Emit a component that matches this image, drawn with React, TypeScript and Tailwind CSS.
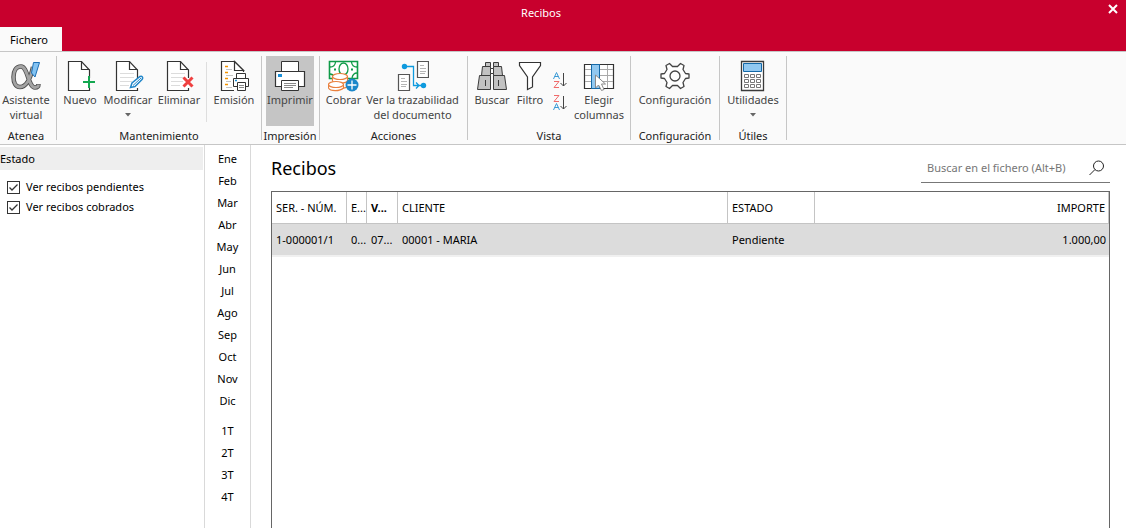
import React, { useState } from 'react';

const months = ['Ene', 'Feb', 'Mar', 'Abr', 'May', 'Jun', 'Jul', 'Ago', 'Sep', 'Oct', 'Nov', 'Dic'];
const quarters = ['1T', '2T', '3T', '4T'];

const Icon: React.FC<{ children: React.ReactNode }> = ({ children }) => (
  <svg width="32" height="32" viewBox="0 0 32 32" fill="none" className="shrink-0">
    {children}
  </svg>
);

const AlphaIcon = () => (
  <Icon>
    <path
      d="M23 7C21 16 17 27 10 27C5.500 27 3.500 22.500 3.500 17C3.500 11 6 6.500 11 6.500C18 6.500 18 27.500 25 27.500C27 27.500 28.500 26.500 28.500 24"
      stroke="#4d4d4d"
      strokeWidth="4.500"
    />
    <path
      d="M23 7C21 16 17 27 10 27C5.500 27 3.500 22.500 3.500 17C3.500 11 6 6.500 11 6.500C18 6.500 18 27.500 25 27.500C27 27.500 28.500 26.500 28.500 24.500"
      stroke="#a3a3a3"
      strokeWidth="2.800"
    />
    <path d="M23.500 2.500H29.500L25 17L21.500 13Z" fill="#83c3f2" stroke="#1c6fb5" />
  </Icon>
);

const SheetOutline = () => (
  <>
    <path d="M25.500 18V10L17.500 1.500H4.500V30.500H25.500V28" fill="#fff" stroke="#333" strokeWidth="1.2" />
    <path d="M17.500 1.500V9.500H25.500" stroke="#333" strokeWidth="1.2" />
  </>
);

const SheetLines = () => <path d="M8 13.500H22M8 17.500H22M8 21.500H20M8 25.500H17" stroke="#dcdcdc" />;

const NewIcon = () => (
  <Icon>
    <SheetOutline />
    <path d="M25 16V28M19 22H31" stroke="#14a750" strokeWidth="2" />
  </Icon>
);

const EditIcon = () => (
  <Icon>
    <SheetOutline />
    <SheetLines />
    <path d="M18.500 27.500L20 23L28 16.500C30 15.500 31.500 17.500 30 19.500L23 26.500Z" fill="#fff" stroke="#2186c9" strokeWidth="1.500" />
    <path d="M21 25.500L29 18" stroke="#2186c9" />
  </Icon>
);

const DeleteIcon = () => (
  <Icon>
    <SheetOutline />
    <SheetLines />
    <path d="M20.500 17.500L29.500 26.500M29.500 17.500L20.500 26.500" stroke="#ef4040" strokeWidth="3" />
  </Icon>
);

const IssueIcon = () => (
  <Icon>
    <path d="M16 30.500H3.500V1.500H16.500L25.500 10.500V12" fill="#fff" stroke="#333" strokeWidth="1.2" />
    <path d="M16.500 1.500V10.500H25.500Z" fill="#fff" stroke="#333" strokeWidth="1.2" />
    <path d="M7 6.500H10M7 12.500H10M7 18.500H10M7 24.500H10" stroke="#f39200" strokeWidth="1.500" />
    <path d="M8 9.500H14M8 15.500H15M8 21.500H13M8 27.500H14" stroke="#c4c4c4" />
    <path d="M18.500 13.500H27.500V18.500H18.500Z" fill="#fff" stroke="#333" />
    <path d="M15.500 18.500H30.500V26.500H15.500Z" fill="#fff" stroke="#333" />
    <path d="M19.500 22.500H27.500V30.500H19.500Z" fill="#fff" stroke="#333" />
    <path d="M21 25.500H26M21 27.500H26" stroke="#888" />
    <path d="M17 20.500H19" stroke="#1a8fd8" strokeWidth="1.500" />
  </Icon>
);

const PrintIcon = () => (
  <Icon>
    <path d="M7.500 1.500H24.500V12.500H7.500Z" fill="#fff" stroke="#333" />
    <path d="M1.500 11.500H30.500V26.500H1.500Z" fill="#fff" stroke="#333" strokeWidth="1.2" />
    <path d="M7.500 20.500H24.500V30.500H7.500Z" fill="#fff" stroke="#333" />
    <path d="M10 23.500H22M10 25.500H22M10 27.500H19" stroke="#888" />
    <path d="M4 14H8V17H4Z" fill="#1a8fd8" />
  </Icon>
);

const CashIcon = () => (
  <Icon>
    <path d="M1.500 1.500H29.500V18.500H1.500Z" fill="#fff" stroke="#0f9b48" strokeWidth="1.6" />
    <path d="M2 7Q7 7 7.500 2M29 7Q24 7 23.500 2M29 13Q25 13 24 18M2 14Q5 14 6 17" stroke="#0f9b48" strokeWidth="1.300" />
    <ellipse cx="15.500" cy="9" rx="4.500" ry="6" stroke="#0f9b48" strokeWidth="1.300" />
    <path d="M6 9.500H8M23 9.500H25" stroke="#0f9b48" strokeWidth="2" />
    <g fill="#fff" stroke="#e9803e" strokeWidth="1.200">
      <path d="M5.500 22V26C7 29 18 29 20.500 26V22Z" />
      <path d="M4.500 17V21C6 24 17 24 19.500 21V17Z" />
      <ellipse cx="12" cy="16.500" rx="7.500" ry="3" />
      <path d="M0.500 25V28C2 31.500 12 31.500 15.500 28V25Z" />
      <ellipse cx="8" cy="24.500" rx="7.500" ry="3" />
    </g>
    <circle cx="24" cy="25" r="6.500" fill="#1b87c9" />
    <path d="M24 20.500V29.500M19.500 25H28.500" stroke="#fff" strokeWidth="1.300" />
  </Icon>
);

const TraceIcon = () => (
  <Icon>
    <path d="M20.500 1.500H31.500V17.500H20.500ZM1.500 14.500H12.500V30.500H1.500Z" fill="#fff" stroke="#555" strokeWidth="1.200" />
    <path d="M23 5.500H27M23 8.500H29M23 11.500H29M23 13.500H28M4 18.500H8M4 21.500H10M4 24.500H10M4 26.500H9" stroke="#b5b5b5" />
    <path d="M8 6.500H16.500V25.500H25M19 22.500L22 25.500L19 28.500" stroke="#0e9ade" strokeWidth="1.300" />
    <circle cx="7.500" cy="6.500" r="2.700" fill="#0e9ade" />
    <circle cx="26.500" cy="25.500" r="2.700" fill="#0e9ade" />
  </Icon>
);

const BinocularsIcon = () => (
  <Icon>
    <g fill="#c2c2c2" stroke="#3c3c3c">
      <path d="M9.500 2.500H14.500V6.500H9.500ZM17.500 2.500H22.500V6.500H17.500Z" />
      <path d="M6.500 6.500H14.500V15.500H5.500ZM17.500 6.500H25.500L26.500 15.500H17.500Z" />
      <path d="M14.500 8.500H17.500V13.500H14.500Z" fill="#fff" />
      <path d="M3.500 15.500H14.500V29.500H1.500ZM17.500 15.500H28.500L30.500 29.500H17.500Z" />
      <path d="M9.500 20V26M22.500 20V26" />
    </g>
  </Icon>
);

const FilterIcon = () => (
  <Icon>
    <path d="M5.500 2.500H26.500V5.500L18.500 17V27L13.500 29.500V17L5.500 5.500Z" fill="#fff" stroke="#333" strokeWidth="1.200" />
  </Icon>
);

const SortIcon: React.FC<{ descending?: boolean }> = ({ descending }) => (
  <svg width="16" height="18" viewBox="0 0 16 18" fill="none">
    <path
      d={descending ? 'M1.500 16L4.500 9.500L7.500 16M2.500 13.500H6.500' : 'M1.500 8L4.500 1.500L7.500 8M2.500 5.500H6.500'}
      stroke="#3c9bd6"
    />
    <path
      d={descending ? 'M2 1.500H7L2 7.500H7' : 'M2 10.500H7L2 16.500H7'}
      stroke="#f06a6a"
    />
    <path d="M11.500 2V15M8.500 12L11.500 15L14.500 12" stroke="#444" />
  </svg>
);

const ColumnsIcon = () => (
  <Icon>
    <path d="M1.500 4.500H30.500V28.500H1.500Z" fill="#fff" stroke="#333" strokeWidth="1.200" />
    <path d="M2 9.500H30M2 15.500H30M2 21.500H30M16.500 5V28M24.500 5V28" stroke="#aaa" />
    <path d="M8.500 4.500H16.500V28.500H8.500Z" fill="#91c8f0" stroke="#1469a8" />
    <path d="M12.500 15V28L15.500 25L18.500 30.500L21 29.500L18.500 24H22.500Z" fill="#fff" stroke="#8a8a8a" />
  </Icon>
);

const GearIcon = () => (
  <Icon>
    <path
      d="M10.500 3.500L13.500 6.500H18.500L21.500 3.500L25 5.500L24 9.500L26.500 13.500L30 14V18L26.500 18.500L24 22.500L25 26.500L21.500 28.500L18.500 25.500H13.500L10.500 28.500L7 26.500L8 22.500L5.500 18.500L2 18V14L5.500 13.500L8 9.500L7 5.500Z"
      fill="#fff"
      stroke="#444"
      strokeWidth="1.300"
      strokeLinejoin="round"
    />
    <circle cx="16" cy="16" r="5" fill="#fff" stroke="#444" strokeWidth="1.300" />
  </Icon>
);

const CalculatorIcon = () => (
  <Icon>
    <path d="M4.500 1.500H26.500V30.500H4.500Z" fill="#fff" stroke="#3a3a3a" strokeWidth="1.300" />
    <path d="M6.500 3.500H24.500V11.500H6.500Z" fill="#91c8f0" stroke="#1469a8" />
    {[14.5, 19.5, 24.5].map(y => (
      <path key={y} d={`M7.500 ${y}h4v3h-4zM13.500 ${y}h4v3h-4zM19.500 ${y}h4v3h-4z`} stroke="#777" />
    ))}
  </Icon>
);

interface RibbonButtonProps {
  label: string;
  icon: React.ReactNode;
  className: string;
  active?: boolean;
  menu?: boolean;
}

const RibbonButton: React.FC<RibbonButtonProps> = ({ label, icon, className, active, menu }) => (
  <button
    type="button"
    className={`flex h-[70px] shrink-0 flex-col items-center pt-1 leading-[15px] whitespace-pre text-[#444] ${className} ${
      active ? 'bg-[#c5c5c5]' : ''
    }`}
  >
    {icon}
    <span>{label}</span>
    {menu && (
      <svg width="6" height="4" viewBox="0 0 6 4" className="mt-1.5">
        <path d="M0 0H6L3 3.500Z" fill="#666" />
      </svg>
    )}
  </button>
);

interface RibbonGroupProps {
  title: string;
  className: string;
  children: React.ReactNode;
}

const RibbonGroup: React.FC<RibbonGroupProps> = ({ title, className, children }) => (
  <section className={`flex shrink-0 flex-col border-r border-[#c6c6c6] ${className}`}>
    <div className="flex justify-center">{children}</div>
    <h2 className="mt-0.5 text-center leading-4 whitespace-nowrap text-[#222]">{title}</h2>
  </section>
);

interface CheckProps {
  id: string;
  label: string;
}

const Check: React.FC<CheckProps> = ({ id, label }) => {
  const [checked, setChecked] = useState(true);

  return (
    <div className="flex h-5 items-center gap-1.5">
      <span className="grid">
        <input
          id={id}
          type="checkbox"
          checked={checked}
          onChange={e => setChecked(e.target.checked)}
          className="col-start-1 row-start-1 size-[13px] appearance-none border border-[#333] bg-white"
        />
        {checked && (
          <svg width="13" height="13" viewBox="0 0 13 13" fill="none" className="pointer-events-none col-start-1 row-start-1">
            <path d="M2.500 6.500L5 9L10.500 3.500" stroke="#333" strokeWidth="1.300" />
          </svg>
        )}
      </span>
      <label htmlFor={id}>{label}</label>
    </div>
  );
};

const PeriodButton: React.FC<{ label: string }> = ({ label }) => (
  <button type="button" className="h-[22px] w-full text-center">
    {label}
  </button>
);

const App: React.FC = () => {
  const [query, setQuery] = useState('');

  return (
    <div className="flex min-h-screen flex-col bg-white font-['Noto_Sans','Open_Sans',sans-serif] text-[11px] text-black">
      <header className="bg-[#c8002d] text-white">
        <div className="flex h-[27px]">
          <h1 className="flex-1 text-center leading-[26px]">Recibos</h1>
          <button type="button" aria-label="Cerrar" className="flex h-[18px] w-11 items-center justify-end pr-2">
            <svg width="10" height="10" viewBox="0 0 10 10" fill="none">
              <path d="M1 1L9 9M9 1L1 9" stroke="#fff" strokeWidth="2" />
            </svg>
          </button>
        </div>
        <div className="flex">
          <button type="button" className="h-6 w-[62px] bg-[#fafafa] pt-0.5 pr-1 text-black">
            Fichero
          </button>
        </div>
      </header>

      {/* Ribbon */}
      <div className="flex h-[94px] border-t border-b border-[#c6c6c6] bg-[#fafafa] py-1">
        <RibbonGroup title="Atenea" className="w-[57px] pr-1">
          <RibbonButton label={'Asistente\nvirtual'} icon={<AlphaIcon />} className="w-[52px]" />
        </RibbonGroup>
        <RibbonGroup title="Mantenimiento" className="w-[205px]">
          <RibbonButton label="Nuevo" icon={<NewIcon />} className="w-[46px]" />
          <RibbonButton label="Modificar" icon={<EditIcon />} className="w-[50px]" menu />
          <RibbonButton label="Eliminar" icon={<DeleteIcon />} className="w-[52px]" />
          <span className="mt-1.5 ml-px h-[60px] w-px shrink-0 bg-[#dedede]" />
          <RibbonButton label="Emisión" icon={<IssueIcon />} className="w-[54px]" />
        </RibbonGroup>
        <RibbonGroup title="Impresión" className="w-[58px] pr-px">
          <RibbonButton label="Imprimir" icon={<PrintIcon />} className="w-12" active />
        </RibbonGroup>
        <RibbonGroup title="Acciones" className="w-[148px]">
          <RibbonButton label="Cobrar" icon={<CashIcon />} className="w-[38px]" />
          <RibbonButton label={'Ver la trazabilidad\ndel documento'} icon={<TraceIcon />} className="w-[100px]" />
        </RibbonGroup>
        <RibbonGroup title="Vista" className="w-[163px]">
          <RibbonButton label="Buscar" icon={<BinocularsIcon />} className="w-10" />
          <RibbonButton label="Filtro" icon={<FilterIcon />} className="w-9" />
          <div className="flex w-6 shrink-0 flex-col items-center gap-[5px] pt-[15px]">
            <button type="button" aria-label="Orden ascendente">
              <SortIcon />
            </button>
            <button type="button" aria-label="Orden descendente">
              <SortIcon descending />
            </button>
          </div>
          <RibbonButton label={'Elegir\ncolumnas'} icon={<ColumnsIcon />} className="w-[54px]" />
        </RibbonGroup>
        <RibbonGroup title="Configuración" className="w-[89px]">
          <RibbonButton label="Configuración" icon={<GearIcon />} className="w-20" />
        </RibbonGroup>
        <RibbonGroup title="Útiles" className="w-[67px]">
          <RibbonButton label="Utilidades" icon={<CalculatorIcon />} className="w-14" menu />
        </RibbonGroup>
      </div>

      <div className="flex flex-1">
        <aside className="w-[205px] shrink-0 border-r border-[#d9d9d9] pt-0.5">
          <h2 className="mr-px h-[23px] bg-[#eee] leading-[23px]">Estado</h2>
          <div className="pt-[7px] pl-[7px]">
            <Check id="pendientes" label="Ver recibos pendientes" />
            <Check id="cobrados" label="Ver recibos cobrados" />
          </div>
        </aside>

        <nav className="flex w-[46px] shrink-0 flex-col border-r border-[#d9d9d9] pt-[3px]">
          {months.map(m => (
            <PeriodButton key={m} label={m} />
          ))}
          <div className="mt-2">
            {quarters.map(q => (
              <PeriodButton key={q} label={q} />
            ))}
          </div>
        </nav>

        <main className="flex min-w-0 flex-1 flex-col pr-4 pl-5">
          <div className="flex h-[46px] items-start justify-between">
            <h2 className="pt-[7px] text-[18px] leading-8">Recibos</h2>
            <div className="mt-2 flex h-[30px] w-[189px] items-center border-b border-[#777]">
              <input
                type="text"
                aria-label="Buscar en el fichero"
                placeholder="Buscar en el fichero (Alt+B)"
                value={query}
                onChange={e => setQuery(e.target.value)}
                className="min-w-0 flex-1 pt-0.5 pl-1.5 outline-none placeholder:text-[#767676]"
              />
              <button type="button" aria-label="Buscar" className="pr-[5px]">
                <svg width="16" height="16" viewBox="0 0 16 16" fill="none">
                  <circle cx="9.500" cy="6" r="5" stroke="#222" />
                  <path d="M6 9.500L0.500 15" stroke="#222" />
                </svg>
              </button>
            </div>
          </div>

          <div className="flex-1 border-x border-t border-[#666]">
            <table className="w-full table-fixed border-separate border-spacing-0">
              <colgroup>
                <col className="w-[75px]" />
                <col className="w-5" />
                <col className="w-[31px]" />
                <col className="w-[330px]" />
                <col className="w-[87px]" />
                <col />
              </colgroup>
              <thead>
                <tr className="h-8 text-left whitespace-nowrap *:border-r *:border-b *:border-[#c4c4c4] *:pt-0.5">
                  <th className="pl-1 font-normal">SER. - NÚM.</th>
                  <th className="pl-1 font-normal">E...</th>
                  <th className="pl-1 font-bold">V...</th>
                  <th className="pl-1 font-normal">CLIENTE</th>
                  <th className="pl-1 font-normal">ESTADO</th>
                  <th className="pr-[3px] text-right font-normal">IMPORTE</th>
                </tr>
              </thead>
              <tbody>
                <tr className="h-[33px] bg-[#dcdcdc] whitespace-nowrap *:border-b-2 *:border-[#f0f0f0] *:pt-0.5">
                  <td className="pl-1">1-000001/1</td>
                  <td className="pl-1">0...</td>
                  <td className="pl-1">07...</td>
                  <td className="pl-1">00001 - MARIA</td>
                  <td className="pl-1">Pendiente</td>
                  <td className="pr-[3px] text-right">1.000,00</td>
                </tr>
              </tbody>
            </table>
          </div>
        </main>
      </div>
    </div>
  );
};

export default App;
